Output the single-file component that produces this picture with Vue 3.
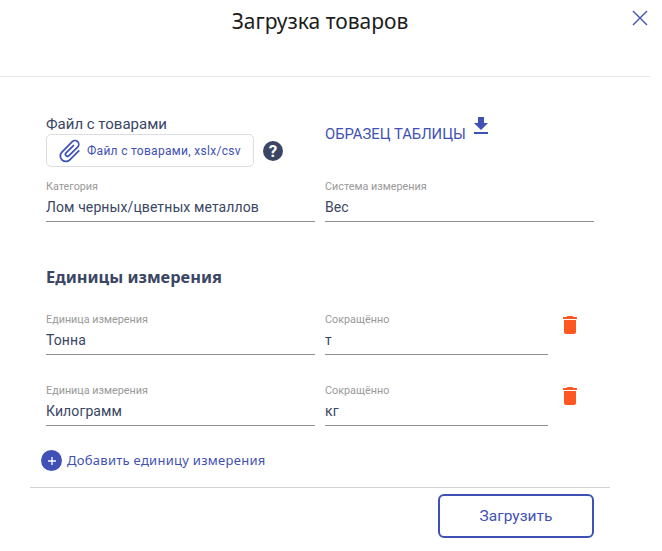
<script setup>
const units = [
  { name: 'Тонна', short: 'т' },
  { name: 'Килограмм', short: 'кг' },
]
</script>

<template>
  <div class="modal">
    <header class="head">
      <h1 class="title">Загрузка товаров</h1>
      <button class="close" aria-label="Закрыть">
        <svg width="18" height="18" viewBox="0 0 18 18"><path d="M2 2l14 14M16 2L2 16" stroke="#3f51b5" stroke-width="1.4" fill="none"/></svg>
      </button>
    </header>
    <main class="body">
      <div class="row top">
        <div class="col">
          <div class="file-label">Файл с товарами</div>
          <div class="file-line">
            <div class="file-box">
              <svg class="clip" width="28" height="28" viewBox="0 0 24 24"><path fill="#3f51b5" d="M16.5 6v11.5a4 4 0 0 1-8 0V5a2.500 2.500 0 0 1 5 0v10.500a1 1 0 0 1-2 0V6H10v9.500a2.500 2.500 0 0 0 5 0V5a4 4 0 0 0-8 0v12.500a5.500 5.500 0 0 0 11 0V6h-1.500z" transform="rotate(45 12 12)"/></svg>
              <span>Файл с товарами, xslx/csv</span>
            </div>
            <span class="help">?</span>
          </div>
        </div>
        <div class="col sample">
          <span class="sample-text">ОБРАЗЕЦ ТАБЛИЦЫ</span>
          <svg class="dl" width="24" height="24" viewBox="0 0 24 24"><path fill="#3f51b5" d="M19 9h-4V3H9v6H5l7 7 7-7zM5 18v2h14v-2H5z"/></svg>
        </div>
      </div>
      <div class="row fields">
        <div class="field col">
          <label>Категория</label>
          <div class="value">Лом черных/цветных металлов</div>
        </div>
        <div class="field col">
          <label>Система измерения</label>
          <div class="value">Вес</div>
        </div>
      </div>
      <h2 class="sub">Единицы измерения</h2>
      <div v-for="u in units" :key="u.name" class="row unit">
        <div class="field col">
          <label>Единица измерения</label>
          <div class="value">{{ u.name }}</div>
        </div>
        <div class="field short">
          <label>Сокращённо</label>
          <div class="value">{{ u.short }}</div>
        </div>
        <svg class="trash" width="24" height="24" viewBox="0 0 24 24"><path fill="#ff5722" d="M6 19c0 1.100.9 2 2 2h8c1.100 0 2-.9 2-2V7H6v12zM19 4h-3.500l-1-1h-5l-1 1H5v2h14V4z"/></svg>
      </div>
      <div class="add">
        <span class="plus"><svg width="10" height="10" viewBox="0 0 10 10"><path d="M5 1v8M1 5h8" stroke="#fff" stroke-width="1.300"/></svg></span>
        <span>Добавить единицу измерения</span>
      </div>
    </main>
    <footer class="foot">
      <button class="submit">Загрузить</button>
    </footer>
  </div>
</template>

<style>
html, body { background: #fff; }
</style>

<style scoped>
.modal { width: 650px; height: 551px; background: #fff; font-family: Roboto, sans-serif; color: #3a4664; overflow: hidden; }
.head { height: 76px; border-bottom: 1px solid #e7e7ec; display: flex; justify-content: center; position: relative; padding-right: 10px; }
.title { margin: 8px 0 0; font: 400 21px/26px "Noto Sans", sans-serif; color: #1c1c1c; }
.close { position: absolute; right: 1px; top: 9px; padding: 0; border: 0; background: none; width: 18px; height: 18px; }
.body { padding: 38px 56px 0 46px; }
.row { display: flex; gap: 10px; }
.col { width: 269px; flex: none; }
.file-label { font-size: 15px; line-height: 18px; }
.file-line { display: flex; align-items: center; margin-top: 1px; }
.file-box { width: 208px; height: 33px; border: 1px solid #dcdde3; border-radius: 5px; display: flex; align-items: center; padding-left: 9px; gap: 3px; box-sizing: border-box; font-size: 12px; color: #3f51b5; letter-spacing: .3px; }
.help { margin-left: 9px; width: 20px; height: 20px; border-radius: 50%; background: #3a4664; color: #fff; font: 700 17px/20px Roboto, sans-serif; text-align: center; }
.sample { display: flex; align-items: flex-start; padding-top: 9px; font-size: 14.8px; color: #3f51b5; }
.sample-text { line-height: 20px; }
.dl { margin: -10px 0 0 3px; }
.fields { margin-top: 13px; }
.field label { display: block; font-size: 10.8px; line-height: 13px; color: #999; }
.field .value { font-size: 14px; line-height: 18px; letter-spacing: .1px; margin-top: 5px; padding-bottom: 5px; border-bottom: 1px solid #8f8f8f; color: #3a4664; }
.sub { margin: 45px 0 0; font: 700 16.4px/20px "Noto Sans", sans-serif; color: #3a4664; }
.unit { margin-top: 26px; }
.unit + .unit { margin-top: 29px; }
.short { width: 223px; flex: none; }
.trash { margin-left: 0; margin-top: 0; }
.add { display: flex; align-items: center; gap: 5px; margin: 24px 0 0 -5px; font: 400 13px/21px "Noto Sans", sans-serif; color: #3f51b5; letter-spacing: .28px; }
.plus { width: 21px; height: 21px; border-radius: 50%; background: #3f51b5; display: flex; align-items: center; justify-content: center; }
.foot { margin: 16px 40px 0 30px; border-top: 1px solid #d2d2d2; padding-top: 6px; display: flex; justify-content: flex-end; padding-right: 16px; }
.submit { width: 156px; height: 44px; border: 2px solid #3f51b5; border-radius: 6px; background: #fff; font: 400 15.5px Roboto, sans-serif; color: #3f51b5; }
</style>
